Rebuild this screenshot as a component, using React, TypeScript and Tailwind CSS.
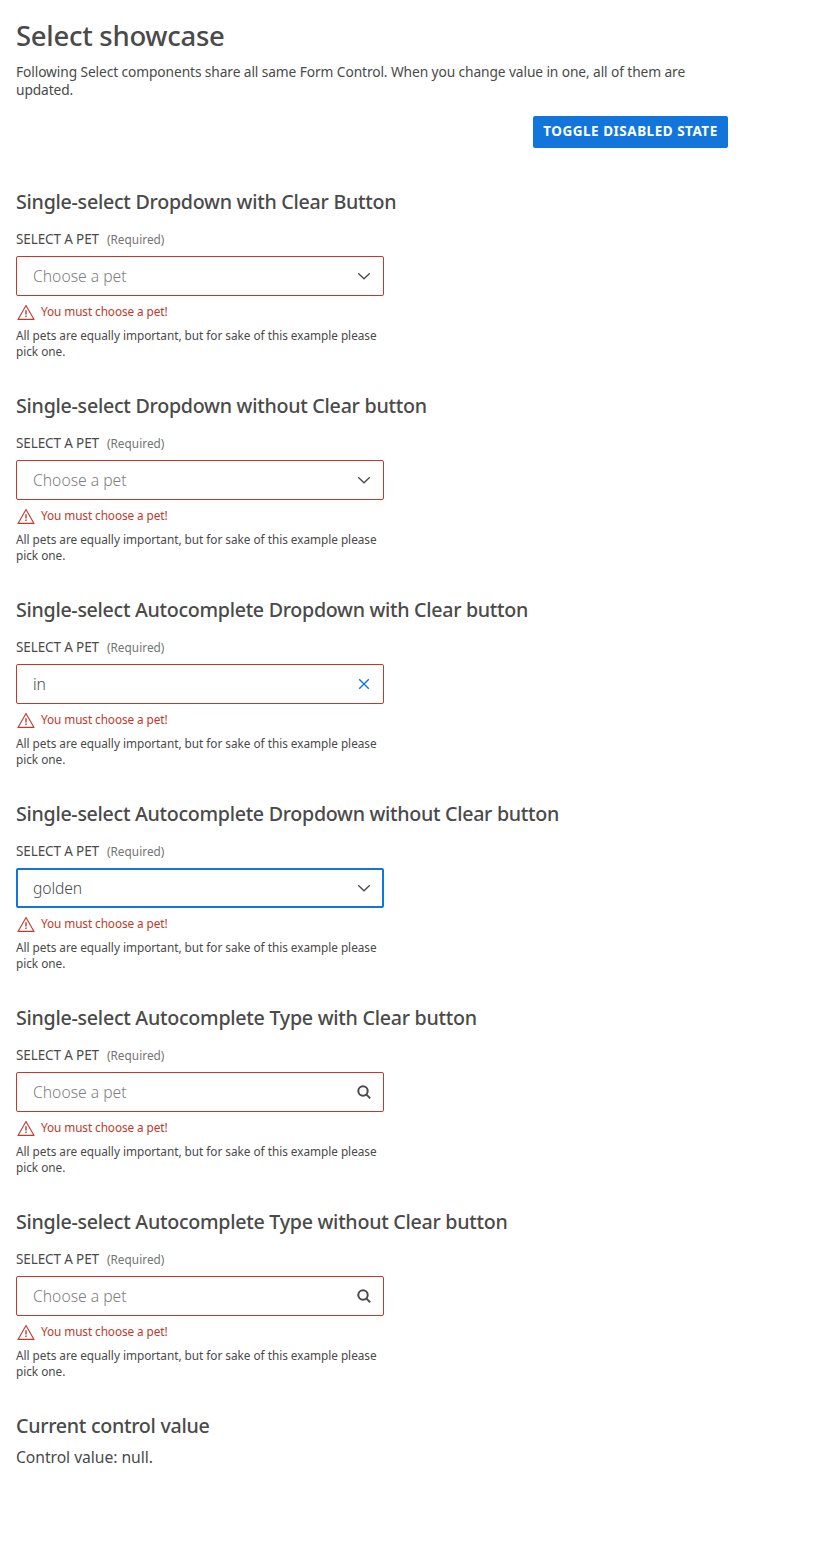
import { useState } from 'react';

type Icon = 'chevron' | 'clear' | 'search';

interface Field {
  title: string;
  tracking: string;
  icon: Icon;
  value?: string;
  focused?: boolean;
}

const fields: Field[] = [
  { title: 'Single-select Dropdown with Clear Button', tracking: 'tracking-[-0.265px]', icon: 'chevron' },
  { title: 'Single-select Dropdown without Clear button', tracking: 'tracking-[-0.265px]', icon: 'chevron' },
  { title: 'Single-select Autocomplete Dropdown with Clear button', tracking: 'tracking-[-0.3px]', icon: 'clear', value: 'in' },
  { title: 'Single-select Autocomplete Dropdown without Clear button', tracking: 'tracking-[-0.3px]', icon: 'chevron', value: 'golden', focused: true },
  { title: 'Single-select Autocomplete Type with Clear button', tracking: 'tracking-[-0.27px]', icon: 'search' },
  { title: 'Single-select Autocomplete Type without Clear button', tracking: 'tracking-[-0.275px]', icon: 'search' },
];

function FieldIcon({ icon }: { icon: Icon }) {
  if (icon === 'chevron') {
    return (
      <svg className="size-4 text-[#4a4a4a]" viewBox="0 0 16 16" fill="none" stroke="currentColor" strokeWidth="1.3">
        <path d="M2.2 5.2 8 10.8l5.8-5.6" />
      </svg>
    );
  }
  if (icon === 'clear') {
    return (
      <svg className="size-4 text-[#1175dc]" viewBox="0 0 16 16" fill="none" stroke="currentColor" strokeWidth="1.4">
        <path d="m3.2 3.2 9.6 9.6M12.8 3.2l-9.6 9.6" />
      </svg>
    );
  }
  return (
    <svg className="size-4 text-[#4a4a4a]" viewBox="0 0 16 16" fill="none" stroke="currentColor" strokeWidth="2">
      <circle cx="7" cy="7" r="4.7" />
      <path d="m10.2 10.4 4 4" />
    </svg>
  );
}

function WarningIcon() {
  return (
    <svg className="h-4 w-[18px] shrink-0" viewBox="0 0 18 16" fill="none" stroke="currentColor">
      <path d="M9 1.5 17 15.4H1Z" strokeLinejoin="round" strokeWidth="1.1" />
      <path d="M9 6.3v4.2M9 11.6v1.5" strokeWidth="1.4" />
    </svg>
  );
}

function SelectField({ title, tracking, icon, value, focused }: Field) {
  return (
    <section className="mb-[35px]">
      <h2 className={`text-[19.65px] leading-6 font-medium whitespace-nowrap ${tracking}`}>{title}</h2>
      <div className="w-[368px]">
        <div className="mt-[17px] flex h-4 items-center gap-2">
          <span className="text-[13.5px] leading-4 tracking-[-0.12px]">SELECT A PET</span>
          <span className="text-[11.8px] leading-4 tracking-[0.03px] text-[#737373]">(Required)</span>
        </div>
        <div
          className={
            focused
              ? 'mt-[9px] flex h-10 items-center justify-between rounded-xs border-2 border-[#1175dc] pr-2.5 pl-[15px]'
              : 'mt-[9px] flex h-10 items-center justify-between rounded-xs border border-[#c0392b] pr-[11px] pl-4'
          }
        >
          {value ? (
            <span className="text-[15.7px] leading-5 font-light tracking-[-0.12px]">{value}</span>
          ) : (
            <span className="text-[15.7px] leading-5 font-light text-[#808080]">Choose a pet</span>
          )}
          <FieldIcon icon={icon} />
        </div>
        <div className="mt-1 flex h-6 items-center gap-1.5 pl-px text-[#c0392b]">
          <WarningIcon />
          <span className="pb-0.5 text-[11.8px] leading-4 tracking-[-0.09px]">You must choose a pet!</span>
        </div>
        <p className="mt-[3px] text-[11.8px] leading-4 tracking-[-0.03px]">
          All pets are equally important, but for sake of this example please pick one.
        </p>
      </div>
    </section>
  );
}

export default function App() {
  const [disabled, setDisabled] = useState(false);
  return (
    <main className="min-h-[1548px] bg-white p-4 font-['Noto_Sans',sans-serif] text-[#4a4a4a]">
      <div className="w-[712px]">
        <h1 className="text-[27.5px] leading-10 font-medium tracking-[-0.28px]">Select showcase</h1>
        <p className="mt-[7px] text-[13.75px] leading-[18px] tracking-[-0.1px]">
          Following Select components share all same Form Control. When you change value in one, all of them are
          updated.
        </p>
        <div className="mt-[17px] flex justify-end">
          <button
            type="button"
            aria-pressed={disabled}
            onClick={() => setDisabled(!disabled)}
            className="h-8 w-[195px] rounded-xs bg-[#1175dc] pb-0.5 text-[13.5px] leading-5 font-bold tracking-[0.51px] whitespace-nowrap text-white"
          >
            TOGGLE DISABLED STATE
          </button>
        </div>
      </div>
      <div className={disabled ? 'mt-[42px] opacity-50' : 'mt-[42px]'}>
        {fields.map((field) => (
          <SelectField key={field.title} {...field} />
        ))}
      </div>
      <h2 className="text-[19.65px] leading-6 font-medium tracking-[-0.29px]">Current control value</h2>
      <p className="mt-[7px] text-[15.7px] leading-6 tracking-[-0.05px]">Control value: null.</p>
    </main>
  );
}
